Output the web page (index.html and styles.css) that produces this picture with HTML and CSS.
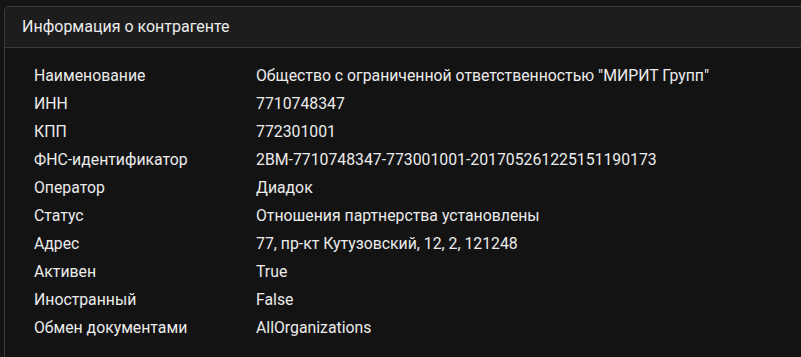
FILE: index.html
```html
<!DOCTYPE html>
<html lang="ru">

<head>
    <meta charset="UTF-8">
    <meta name="viewport" content="width=device-width, initial-scale=1.0">
    <title>Информация о контрагенте</title>
    <link rel="stylesheet" href="styles.css">
</head>

<body>
    <div class="card">
        <div class="card-header">Информация о контрагенте</div>
        <div class="card-body">
            <div class="row"><span class="label">Наименование</span><span class="value">Общество с ограниченной ответственностью "МИРИТ Групп"</span></div>
            <div class="row"><span class="label">ИНН</span><span class="value">7710748347</span></div>
            <div class="row"><span class="label">КПП</span><span class="value">772301001</span></div>
            <div class="row"><span class="label">ФНС-идентификатор</span><span class="value">2BM-7710748347-773001001-201705261225151190173</span></div>
            <div class="row"><span class="label">Оператор</span><span class="value">Диадок</span></div>
            <div class="row"><span class="label">Статус</span><span class="value">Отношения партнерства установлены</span></div>
            <div class="row"><span class="label">Адрес</span><span class="value">77, пр-кт Кутузовский, 12, 2, 121248</span></div>
            <div class="row"><span class="label">Активен</span><span class="value">True</span></div>
            <div class="row"><span class="label">Иностранный</span><span class="value">False</span></div>
            <div class="row"><span class="label">Обмен документами</span><span class="value">AllOrganizations</span></div>
        </div>
    </div>
</body>

</html>
```

FILE: styles.css
```css
body {
    margin: 0;
    background: #141414;
    font-family: Roboto, "Liberation Sans", sans-serif;
    color: #ececec;
    overflow: hidden;
}

.card {
    margin: 6px -20px 0 4px;
    border: 1px solid #3a3a3a;
    border-radius: 5px;
    background: #131313;
}

.card-header {
    height: 40px;
    line-height: 40px;
    padding-left: 17px;
    font-size: 16px;
    background: #1d1d1d;
    border-bottom: 1px solid #3a3a3a;
    border-radius: 5px 5px 0 0;
}

.card-body {
    padding: 14px 0 20px 29px;
}

.row {
    display: flex;
    height: 28px;
    line-height: 28px;
    font-size: 15.8px;
}

.label {
    width: 222px;
    flex: none;
}
```
